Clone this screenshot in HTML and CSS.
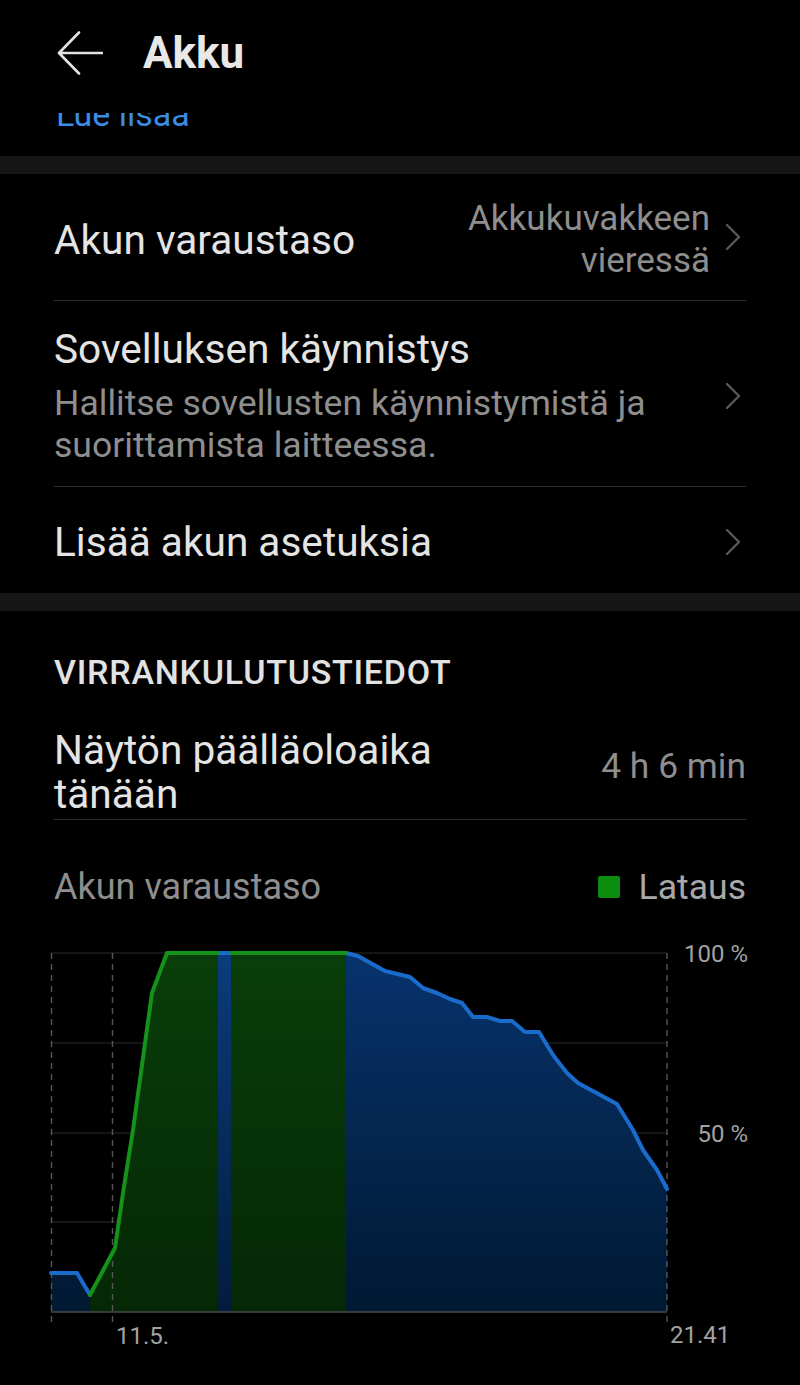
FILE: index.html
```html
<!DOCTYPE html>
<html lang="fi">
<head>
<meta charset="utf-8">
<title>Akku</title>
<link rel="stylesheet" href="styles.css">
</head>
<body>
<header class="appbar">
  <svg class="back" width="46" height="44" viewBox="0 0 46 44" aria-hidden="true">
    <path d="M45 22 H3 M22 1.5 L2 22 L22 42.5" fill="none" stroke="#e2e2e2" stroke-width="2.6" stroke-linecap="round" stroke-linejoin="round"/>
  </svg>
  <h1 class="title">Akku</h1>
</header>
<div class="peek"><a class="link">Lue lisää</a></div>
<div class="band"></div>
<section class="list">
  <div class="row row-1">
    <div class="row-title">Akun varaustaso</div>
    <div class="row-value">Akkukuvakkeen<br>vieressä</div>
    <svg class="chev" width="16" height="28" viewBox="0 0 16 28" aria-hidden="true"><path d="M2 2 L14 14 L2 26" fill="none" stroke="#585858" stroke-width="2.4" stroke-linecap="round" stroke-linejoin="round"/></svg>
  </div>
  <div class="row row-2">
    <div class="row-text">
      <div class="row-title">Sovelluksen käynnistys</div>
      <div class="row-sub">Hallitse sovellusten käynnistymistä ja suorittamista laitteessa.</div>
    </div>
    <svg class="chev" width="16" height="28" viewBox="0 0 16 28" aria-hidden="true"><path d="M2 2 L14 14 L2 26" fill="none" stroke="#585858" stroke-width="2.4" stroke-linecap="round" stroke-linejoin="round"/></svg>
  </div>
  <div class="row row-3">
    <div class="row-title">Lisää akun asetuksia</div>
    <svg class="chev" width="16" height="28" viewBox="0 0 16 28" aria-hidden="true"><path d="M2 2 L14 14 L2 26" fill="none" stroke="#585858" stroke-width="2.4" stroke-linecap="round" stroke-linejoin="round"/></svg>
  </div>
</section>
<div class="band"></div>
<section class="stats">
  <h2 class="section-title">VIRRANKULUTUSTIEDOT</h2>
  <div class="stat-row">
    <div class="stat-label">Näytön päälläoloaika<br>tänään</div>
    <div class="stat-value">4 h 6 min</div>
  </div>
  <div class="chart-head">
    <span class="chart-label">Akun varaustaso</span>
    <span class="legend"><i class="swatch"></i>Lataus</span>
  </div>
</section>
<svg class="chart" width="800" height="455" viewBox="0 930 800 455" aria-label="Akun varaustaso">
  <defs>
    <linearGradient id="gBlue" x1="0" y1="953" x2="0" y2="1312" gradientUnits="userSpaceOnUse">
      <stop offset="0" stop-color="#07336d"/>
      <stop offset="1" stop-color="#011932"/>
    </linearGradient>
    <linearGradient id="gGreen" x1="0" y1="953" x2="0" y2="1312" gradientUnits="userSpaceOnUse">
      <stop offset="0" stop-color="#093e0a"/>
      <stop offset="1" stop-color="#052705"/>
    </linearGradient>
    <linearGradient id="gBand" x1="0" y1="953" x2="0" y2="1312" gradientUnits="userSpaceOnUse">
      <stop offset="0" stop-color="#0b3c7c"/>
      <stop offset="1" stop-color="#021c3c"/>
    </linearGradient>
  </defs>
  <!-- grid -->
  <g stroke="#2b2b2b" stroke-width="1.2">
    <line x1="51" y1="953" x2="667" y2="953"/>
    <line x1="51" y1="1043" x2="667" y2="1043"/>
    <line x1="51" y1="1133" x2="667" y2="1133"/>
    <line x1="51" y1="1222" x2="667" y2="1222"/>
  </g>
  <!-- blue area -->
  <path fill="url(#gBlue)" d="M51 1273 L77 1273 L90 1295 L115 1248 L123 1193 L133 1130 L152 993 L167 953 L347 953 L358 956 L385 971 L410 977 L423 988 L437 993 L450 999 L462 1003 L473 1017 L487 1017 L500 1021 L512 1021 L525 1032 L539 1032 L553 1055 L567 1073 L578 1083 L617 1104 L633 1130 L643 1150 L657 1170 L667 1189 L667 1312 L51 1312 Z"/>
  <rect x="218" y="953" width="13" height="359" fill="url(#gBand)"/>
  <!-- charging areas -->
  <path fill="url(#gGreen)" d="M90 1295 L115 1248 L123 1193 L133 1130 L152 993 L167 953 L218 953 L218 1312 L90 1312 Z"/>
  <rect x="231" y="953" width="115" height="359" fill="url(#gGreen)"/>
  <!-- verticals -->
  <g stroke="#555" stroke-width="1.4" stroke-dasharray="6 5">
    <line x1="51.5" y1="953" x2="51.5" y2="1323"/>
    <line x1="112.5" y1="953" x2="112.5" y2="1323"/>
    <line x1="667" y1="953" x2="667" y2="1323"/>
  </g>
  <line x1="51" y1="1312" x2="667" y2="1312" stroke="#4a4a4a" stroke-width="1.6"/>
  <!-- lines -->
  <g fill="none" stroke-width="4" stroke-linejoin="round" stroke-linecap="round">
    <path stroke="#1a6ccc" d="M51 1273 L77 1273 L90 1295"/>
    <path stroke="#1a6ccc" d="M218 953 L231 953"/>
    <path stroke="#1a6ccc" d="M346 953 L358 956 L385 971 L410 977 L423 988 L437 993 L450 999 L462 1003 L473 1017 L487 1017 L500 1021 L512 1021 L525 1032 L539 1032 L553 1055 L567 1073 L578 1083 L617 1104 L633 1130 L643 1150 L657 1170 L667 1189"/>
    <path stroke="#15921a" d="M90 1295 L115 1248 L123 1193 L133 1130 L152 993 L167 953 L218 953"/>
    <path stroke="#15921a" d="M231 953 L346 953"/>
  </g>
  <g class="axis-text">
    <text x="748" y="962" text-anchor="end">100 %</text>
    <text x="748" y="1142" text-anchor="end">50 %</text>
    <text x="116" y="1344">11.5.</text>
    <text x="670" y="1343">21.41</text>
  </g>
</svg>
</body>
</html>
```

FILE: styles.css
```css
* { box-sizing: border-box; }
html, body { margin: 0; padding: 0; background: #000; }
body {
  width: 800px;
  height: 1385px;
  overflow: hidden;
  font-family: Roboto, "Noto Sans", "Liberation Sans", sans-serif;
  color: #e4e4e4;
}

.appbar {
  height: 113px;
  display: flex;
  align-items: center;
  padding: 0 0 7px 57px;
  position: relative;
  z-index: 2;
  background: #000;
}
.back { display: block; flex: none; }
.title {
  margin: 0 0 0 40px;
  font-size: 44px;
  font-weight: 700;
  color: #e8e8e8;
  line-height: 52px;
}

.peek {
  height: 43px;
  overflow: hidden;
  padding-left: 56px;
}
.link {
  display: block;
  margin-top: -19px;
  font-size: 34px;
  line-height: 40px;
  color: #3a8de2;
}

.band { height: 18px; background: #161616; }

.list { margin: 0 54px; }
.row {
  display: flex;
  align-items: center;
  border-bottom: 1px solid #2c2c2c;
}
.row:last-child { border-bottom: none; }
.row-1 { height: 127px; }
.row-1 .row-title { padding-top: 6px; }
.row-1 .row-value { padding-top: 5px; }
.row-2 { padding: 25px 0 20px; }
.row-3 { padding: 32px 0 28px; }
.row-title {
  font-size: 40.6px;
  line-height: 46px;
  color: #e4e4e4;
}
.row-text { flex: 1; min-width: 0; }
.row-sub {
  margin-top: 10px;
  font-size: 35.6px;
  line-height: 42px;
  color: #8e8e8e;
  padding-right: 30px;
}
.row-value {
  margin-left: auto;
  margin-right: 15px;
  text-align: right;
  font-size: 35px;
  line-height: 42px;
  color: #8e8e8e;
}
.row-3 .chev, .row-2 .chev { margin-left: auto; }
.chev { flex: none; display: block; margin-right: 5px; }

.stats { margin: 0 54px; }
.section-title {
  margin: 0;
  padding-top: 41px;
  font-size: 34px;
  font-weight: 500;
  letter-spacing: 0.75px;
  line-height: 40px;
  color: #e2e2e2;
}
.stat-row {
  display: flex;
  align-items: center;
  justify-content: space-between;
  padding: 36px 0 3px;
  border-bottom: 1px solid #2c2c2c;
}
.stat-label {
  font-size: 40.6px;
  line-height: 44px;
  color: #e4e4e4;
}
.stat-value {
  font-size: 35.4px;
  line-height: 42px;
  color: #8e8e8e;
  padding-bottom: 12px;
}

.chart-head {
  display: flex;
  align-items: center;
  justify-content: space-between;
  margin-top: 46px;
  height: 42px;
}
.chart-label {
  font-size: 36px;
  line-height: 42px;
  color: #8e8e8e;
}
.legend {
  display: flex;
  align-items: center;
  font-size: 35.6px;
  line-height: 42px;
  color: #a8a8a8;
}
.swatch {
  display: block;
  width: 22px;
  height: 22px;
  border-radius: 2px;
  background: #0d8d10;
  margin-right: 19px;
}

.chart { display: block; margin-top: 22px; }
.axis-text text {
  font-family: Roboto, "Noto Sans", "Liberation Sans", sans-serif;
  font-size: 24px;
  fill: #a2a2a2;
}
```
